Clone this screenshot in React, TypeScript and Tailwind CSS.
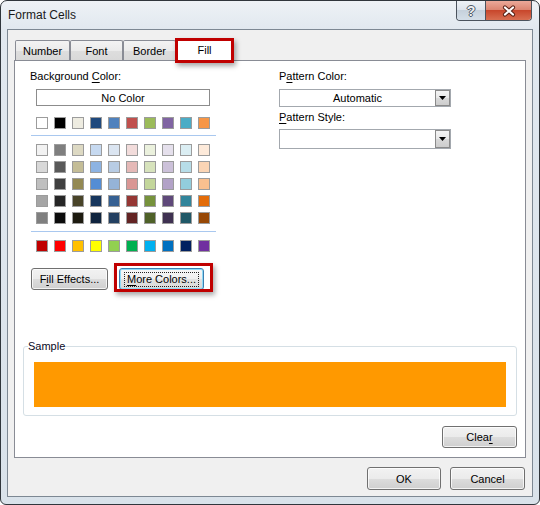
import React from "react";

const themeRow = ["#FFFFFF", "#000000", "#EEECE1", "#1F497D", "#4F81BD", "#C0504D", "#9BBB59", "#8064A2", "#4BACC6", "#F79646"];

const tintRows = [
  ["#F2F2F2", "#7F7F7F", "#DDD9C3", "#C6D9F0", "#DBE5F1", "#F2DCDB", "#EBF1DD", "#E5E0EC", "#DBEEF3", "#FDEADA"],
  ["#D8D8D8", "#595959", "#C4BD97", "#8DB3E2", "#B8CCE4", "#E5B9B7", "#D7E3BC", "#CCC1D9", "#B7DDE8", "#FBD5B5"],
  ["#BFBFBF", "#3F3F3F", "#938953", "#548DD4", "#95B3D7", "#D99694", "#C3D69B", "#B2A2C7", "#92CDDC", "#FAC08F"],
  ["#A5A5A5", "#262626", "#494429", "#17365D", "#366092", "#953734", "#76923C", "#5F497A", "#31859B", "#E36C09"],
  ["#7F7F7F", "#0C0C0C", "#1D1B10", "#0F243E", "#244061", "#632423", "#4F6128", "#3F3151", "#205867", "#974806"],
];

const standardRow = ["#C00000", "#FF0000", "#FFC000", "#FFFF00", "#92D050", "#00B050", "#00B0F0", "#0070C0", "#002060", "#7030A0"];

function SwatchRow({ colors }: { colors: string[] }) {
  return (
    <div className="flex gap-[6px]">
      {colors.map((c, i) => (
        <div key={i} className="h-[12px] w-[12px] border border-[#9c9c9c]" style={{ backgroundColor: c }} />
      ))}
    </div>
  );
}

function Btn({ children, className = "" }: { children: React.ReactNode; className?: string }) {
  return (
    <div
      className={`flex items-center justify-center rounded-[3px] border border-[#707070] bg-[linear-gradient(#f2f2f2,#ebebeb_50%,#dddddd_50%,#cfcfcf)] shadow-[inset_0_0_0_1px_rgba(255,255,255,0.75)] ${className}`}
    >
      {children}
    </div>
  );
}

function Combo({ value, className = "" }: { value: string; className?: string }) {
  return (
    <div className={`flex w-[172px] border border-[#a3a8ae] bg-white ${className}`}>
      <div className="flex flex-1 items-center justify-center">{value}</div>
      <div className="flex w-[15px] items-center justify-center border border-[#8a8a8a] bg-[linear-gradient(#f4f4f4,#e8e8e8_50%,#d9d9d9_50%,#cdcdcd)]">
        <svg width="7" height="4" viewBox="0 0 7 4">
          <path d="M0 0h7L3.5 4z" fill="#000" />
        </svg>
      </div>
    </div>
  );
}

function Tab({ label, w }: { label: string; w: string }) {
  return (
    <div
      className={`flex h-[20px] items-center justify-center rounded-t-[2px] border border-b-0 border-[#898c95] bg-[linear-gradient(#f3f3f3,#ebebeb_50%,#dedede_50%,#d9d9d9)] ${w}`}
    >
      {label}
    </div>
  );
}

export default function App() {
  return (
    <div className="h-[505px] w-[540px] bg-white font-['Liberation_Sans',Arial,sans-serif] text-[11px] leading-[14px] text-black">
      <div className="relative flex h-[505px] w-[540px] flex-col rounded-t-[7px] rounded-b-[6px] border border-[#30363c] bg-[linear-gradient(180deg,#eef2f6_0px,#e1e8ef_28px,#d9e2ea_100%)]">
        {/* title bar */}
        <div className="flex h-[28px] shrink-0 items-center pl-[7px] text-[12px] text-[#1a1a1a]">Format Cells</div>

        {/* caption buttons */}
        <div className="absolute right-[7px] top-0 flex h-[20px] overflow-hidden rounded-b-[4px] border border-t-0 border-[#4b535d]">
          <div className="flex w-[28px] items-center justify-center bg-[linear-gradient(#eef2f6,#dde4ec_45%,#c6d1dc_50%,#d4dee8)] text-[14px] font-bold text-[#eef1f4] [text-shadow:1px_0_#505a66,-1px_0_#505a66,0_1px_#505a66,0_-1px_#505a66]">
            ?
          </div>
          <div className="w-px bg-[#4b535d]" />
          <div className="flex w-[45px] items-center justify-center bg-[linear-gradient(#eba999,#dc8672_45%,#c8472c_50%,#d86f52)]">
            <svg width="14" height="12" viewBox="0 0 14 12">
              <path d="M3 2.5l8 7M11 2.5l-8 7" stroke="#5b2317" strokeWidth="4.2" strokeLinecap="round" />
              <path d="M3 2.5l8 7M11 2.5l-8 7" stroke="#fff" strokeWidth="2.2" strokeLinecap="round" />
            </svg>
          </div>
        </div>

        {/* client area */}
        <div className="mx-[6px] flex h-[468px] flex-col border border-[#7d8893] bg-[#f0f0f0]">
          {/* tabs */}
          <div className="mt-[8px] flex h-[22px] items-end pl-[7px]">
            <Tab label="Number" w="w-[55px]" />
            <Tab label="Font" w="w-[53px]" />
            <Tab label="Border" w="w-[53px]" />
            <div className="relative z-10 -mb-px flex h-[23px] w-[57px] items-center justify-center rounded-t-[2px] border border-b-0 border-[#898c95] bg-white">
              Fill
              <div className="absolute -left-[2px] -top-[1px] h-[25px] w-[59px] border-[3px] border-[#c00000] shadow-[2px_3px_5px_rgba(0,0,0,0.35)]" />
            </div>
          </div>

          {/* panel */}
          <div className="ml-[6px] flex h-[398px] w-[512px] flex-col border border-[#898c95] bg-white">
            <div className="flex pt-[8px]">
              {/* left column */}
              <div className="w-[264px] shrink-0 pl-[15px]">
                <div>
                  Background <span className="underline underline-offset-[2px]">C</span>olor:
                </div>
                <div className="ml-[6px] mt-[6px] flex h-[17px] w-[174px] items-center justify-center border border-[#8c8c8c]">
                  No Color
                </div>
                <div className="ml-[6px] mt-[11px]">
                  <SwatchRow colors={themeRow} />
                </div>
                <div className="ml-[1px] mt-[6px] h-px w-[185px] bg-[#a9c8ef]" />
                <div className="ml-[6px] mt-[8px] flex flex-col gap-[5px]">
                  {tintRows.map((r, i) => (
                    <SwatchRow key={i} colors={r} />
                  ))}
                </div>
                <div className="ml-[1px] mt-[7px] h-px w-[185px] bg-[#a9c8ef]" />
                <div className="ml-[6px] mt-[8px]">
                  <SwatchRow colors={standardRow} />
                </div>
                <div className="mt-[16px] flex">
                  <Btn className="ml-[1px] h-[22px] w-[77px]">
                    <span>
                      F<span className="underline underline-offset-[2px]">i</span>ll Effects...
                    </span>
                  </Btn>
                  <div className="relative ml-[11px]">
                    <div className="flex h-[22px] w-[85px] items-center justify-center rounded-[3px] border border-[#3c7fb1] bg-[linear-gradient(#f7f7f7,#efefef_50%,#e3e3e3_50%,#d8d8d8)] shadow-[inset_0_0_0_1px_#8fdaf6]">
                      <span className="border border-dotted border-[#222] px-[2px] leading-[13px]">
                        <span className="underline underline-offset-[2px]">M</span>ore Colors...
                      </span>
                    </div>
                    <div className="absolute -left-[5px] -top-[5px] h-[29px] w-[99px] border-[3px] border-[#c00000] shadow-[2px_3px_5px_rgba(0,0,0,0.35)]" />
                  </div>
                </div>
              </div>

              {/* right column */}
              <div className="w-[172px]">
                <div>
                  P<span className="underline underline-offset-[2px]">a</span>ttern Color:
                </div>
                <Combo value="Automatic" className="mt-[6px] h-[18px]" />
                <div className="mt-[3px]">
                  <span className="underline underline-offset-[2px]">P</span>attern Style:
                </div>
                <Combo value="" className="mt-[5px] h-[20px]" />
              </div>
            </div>

            {/* sample */}
            <fieldset className="mx-[8px] mt-[49px] rounded-[3px] border border-[#d5dfe5] px-0 pb-[8px]">
              <legend className="ml-[4px] px-0 leading-[14px] text-[#0a0a1e]">Sample</legend>
              <div className="mx-[10px] mt-[9px] h-[45px] bg-[#ff9900]" />
            </fieldset>

            <div className="mr-[8px] mt-[10px] flex justify-end">
              <Btn className="h-[22px] w-[75px]">
                <span>
                  Clea<span className="underline underline-offset-[2px]">r</span>
                </span>
              </Btn>
            </div>
          </div>

          {/* dialog buttons */}
          <div className="mt-[9px] flex justify-end gap-[9px] pr-[7px]">
            <Btn className="h-[23px] w-[74px]">OK</Btn>
            <Btn className="h-[23px] w-[75px]">Cancel</Btn>
          </div>
        </div>
      </div>
    </div>
  );
}
